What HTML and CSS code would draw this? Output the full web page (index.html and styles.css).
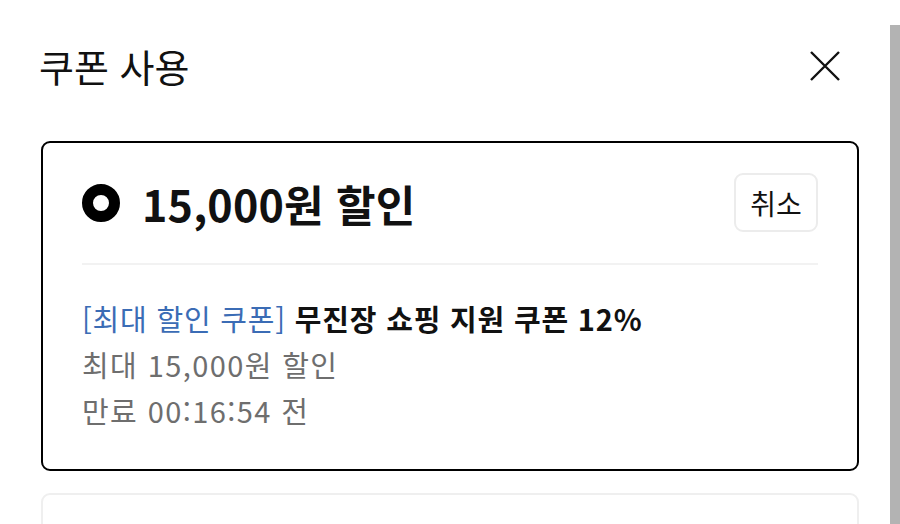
FILE: index.html
```html
<!DOCTYPE html>
<html lang="ko">

<head>
    <meta charset="UTF-8" />
    <meta name="viewport" content="width=device-width, initial-scale=1.0" />
    <title>쿠폰 사용</title>

    <link rel="stylesheet" href="styles.css">
</head>

<body>
    <div class="sheet">
        <main class="panel">
            <header class="panel-head">
                <h1 class="panel-title">쿠폰 사용</h1>
                <button type="button" class="close-button" aria-label="닫기">
                    <svg width="34" height="34" viewBox="0 0 34 34">
                        <path d="M3 3 L31 31 M31 3 L3 31" stroke="#111" stroke-width="2.4" fill="none" />
                    </svg>
                </button>
            </header>

            <section class="coupon selected">
                <div class="coupon-head">
                    <span class="radio"></span>
                    <h2 class="coupon-amount">15,000원 할인</h2>
                    <button type="button" class="cancel-button">취소</button>
                </div>
                <hr class="divider">
                <div class="coupon-body">
                    <p class="coupon-name"><span class="tag">[최대 할인 쿠폰]</span> 무진장 쇼핑 지원 쿠폰 12%</p>
                    <p class="coupon-info">최대 15,000원 할인</p>
                    <p class="coupon-info">만료 00:16:54 전</p>
                </div>
            </section>

            <section class="coupon"></section>
        </main>
        <div class="scrollbar"></div>
    </div>
</body>

</html>
```

FILE: styles.css
```css
* {
    margin: 0;
    padding: 0;
    box-sizing: border-box;
}

html {
    font-family: "Noto Sans CJK KR", "Noto Sans", sans-serif;
    color: #111;
}

body {
    background: #fff;
    height: 524px;
    overflow: hidden;
}

.sheet {
    display: flex;
    height: 100%;
}

.panel {
    flex: 1;
    overflow: hidden;
    padding: 0 31px 0 41px;
}

.scrollbar {
    background-color: #b3b3b3;
    margin-top: 25px;
    width: 10px;
}

.panel-head {
    align-items: center;
    display: flex;
    height: 131px;
    justify-content: space-between;
}

.panel-title {
    font-size: 38px;
    font-weight: 400;
    margin-left: -2px;
}

.close-button {
    background: none;
    border: none;
    display: flex;
    margin-right: 17px;
}

.coupon {
    border: 2px solid #efefef;
    border-radius: 9px;
    height: 330px;
    margin-top: 10px;
    padding: 30px 39px;
}

.coupon.selected {
    border-color: #000;
}

.coupon + .coupon {
    height: 120px;
    margin-top: 22px;
}

.coupon-head {
    align-items: center;
    display: flex;
    height: 59px;
}

.radio {
    border: 11px solid #000;
    border-radius: 50%;
    height: 38px;
    width: 38px;
}

.coupon-amount {
    flex: 1;
    font-size: 43px;
    font-weight: 700;
    letter-spacing: 0.2px;
    margin-left: 22px;
}

.cancel-button {
    background: #fff;
    border: 2px solid #ececec;
    border-radius: 9px;
    color: #111;
    font-family: inherit;
    font-size: 28px;
    height: 59px;
    width: 84px;
}

.divider {
    border: none;
    border-top: 2px solid #f2f2f2;
    margin: 31px 0 30px;
}

.coupon-body p {
    font-size: 29px;
    letter-spacing: 0.8px;
    line-height: 46px;
}

.coupon-name {
    font-weight: 700;
}

.tag {
    color: #3b6cb5;
    font-weight: 400;
}

.coupon-body .coupon-info {
    color: #6e6e6e;
    letter-spacing: 1.4px;
}
```
